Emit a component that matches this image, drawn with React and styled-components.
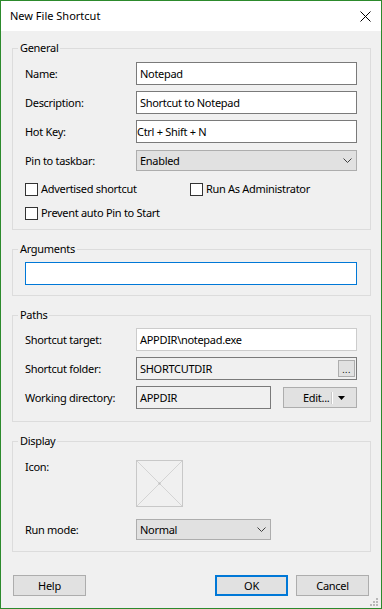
import React from 'react';
import styled, { createGlobalStyle } from 'styled-components';

const Global = createGlobalStyle`
  html, body { margin: 0; padding: 0; background: #fff; }
  body { font-family: "Noto Sans", "Open Sans", sans-serif; font-size: 11px; color: #000; letter-spacing: -0.3px; }
  *, *::before, *::after { box-sizing: border-box; }
`;

const Window = styled.div`
  position: relative;
  width: 382px;
  height: 609px;
  border: 1px solid #2c8a2c;
  display: flex;
  flex-direction: column;
  background: #f0f0f0;
`;

const TitleBar = styled.div`
  flex: none;
  height: 30px;
  background: #fff;
  display: flex;
  align-items: center;
  justify-content: space-between;
  padding: 0 10px 0 9px;
  font-size: 11px;
  line-height: 16px;
  letter-spacing: 0;
`;

const Body = styled.div`
  flex: 1;
  display: flex;
  flex-direction: column;
  gap: 11px;
  padding: 9px 10px 12px 11px;
`;

const Group = styled.fieldset`
  margin: 0;
  padding: 0;
  min-width: 0;
  border: 1px solid #dcdcdc;
`;

const Legend = styled.legend`
  margin-left: 5px;
  padding: 0 2px;
  line-height: 16px;
`;

const GroupBody = styled.div`
  padding: ${p => p.$pad};
`;

const FormGrid = styled.div`
  display: grid;
  grid-template-columns: 111px 221px;
  grid-auto-rows: 23px;
  row-gap: 6px;
  align-items: center;
`;

const Label = styled.div`
  line-height: 16px;
  white-space: nowrap;
  align-self: ${p => (p.$top ? 'start' : 'center')};
  margin-top: ${p => (p.$top ? '10px' : '0')};
`;

const TextBox = styled.div`
  height: 23px;
  width: ${p => p.$width || '100%'};
  display: flex;
  align-items: center;
  justify-content: ${p => (p.$spread ? 'space-between' : 'flex-start')};
  padding: 0 ${p => (p.$flush ? '0' : '3px')};
  background: ${p => (p.$readonly ? '#f0f0f0' : '#fff')};
  border: 1px solid ${p => p.$border || '#7a7a7a'};
  line-height: 16px;
  white-space: nowrap;
`;

const Select = styled.div`
  height: 21px;
  width: ${p => p.$width || '100%'};
  display: flex;
  align-items: center;
  justify-content: space-between;
  padding: 0 4px 0 3px;
  background: #e1e1e1;
  border: 1px solid #adadad;
  line-height: 16px;
`;

const Chevron = () => (
  <svg width="9" height="5" viewBox="0 0 9 5">
    <polyline points="0.5,0.5 4.5,4.5 8.5,0.5" fill="none" stroke="#404040" strokeWidth="1" />
  </svg>
);

const CheckGrid = styled.div`
  display: grid;
  grid-template-columns: 165px 1fr;
  row-gap: 8px;
  margin-top: 9px;
  padding-bottom: 8px;
`;

const CheckItem = styled.label`
  display: flex;
  align-items: center;
  gap: 3px;
  line-height: 16px;
  white-space: nowrap;
`;

const CheckBox = styled.span`
  flex: none;
  width: 13px;
  height: 13px;
  border: 1px solid #333;
  background: #fff;
`;

const Row = styled.div`
  display: flex;
  align-items: center;
  gap: 12px;
`;

const Button = styled.div`
  width: ${p => p.$width || '73px'};
  height: 21px;
  display: flex;
  align-items: center;
  justify-content: center;
  background: #e1e1e1;
  border: ${p => (p.$default ? '2px solid #0078d7' : '1px solid #adadad')};
  line-height: 16px;
`;

const SplitButton = styled(Button)`
  width: 74px;
  justify-content: flex-start;
  padding-left: 19px;
`;

const SplitDivider = styled.span`
  width: 1px;
  height: 12px;
  margin-left: 3px;
  background: #fff;
  box-shadow: -1px 0 0 #c8c8c8;
`;

const SplitArrow = styled.svg`
  margin-left: 5px;
`;

const BrowseButton = styled.div`
  width: 17px;
  height: 17px;
  display: flex;
  align-items: flex-end;
  justify-content: center;
  margin-right: -2px;
  padding-bottom: 2px;
  background: #e1e1e1;
  border: 1px solid #adadad;
  font-size: 9px;
  line-height: 9px;
  letter-spacing: 0.5px;
`;

const IconBox = styled.div`
  width: 47px;
  height: 47px;
  margin-top: 11px;
  display: flex;
`;

const DisplayGrid = styled.div`
  display: grid;
  grid-template-columns: 111px 221px;
  grid-template-rows: auto 21px;
  row-gap: 12px;
`;

const Footer = styled.div`
  margin-top: auto;
  display: flex;
  justify-content: space-between;
  padding: 0 2px 0 1px;
`;

const ButtonGroup = styled.div`
  display: flex;
  gap: 8px;
`;

const Grip = styled.svg`
  position: absolute;
  right: 3px;
  bottom: 2px;
`;

export default function App() {
  return (
    <>
      <Global />
      <Window>
        <TitleBar>
          <span>New File Shortcut</span>
          <svg width="11" height="11" viewBox="0 0 11 11">
            <path d="M0.5 0.5 L10.5 10.5 M10.5 0.5 L0.5 10.5" stroke="#000" strokeWidth="1" fill="none" />
          </svg>
        </TitleBar>
        <Body>
          <Group>
            <Legend>General</Legend>
            <GroupBody $pad="6px 13px 0 12px">
              <FormGrid>
                <Label>Name:</Label>
                <TextBox>Notepad</TextBox>
                <Label>Description:</Label>
                <TextBox>Shortcut to Notepad</TextBox>
                <Label>Hot Key:</Label>
                <TextBox $flush>Ctrl + Shift + N</TextBox>
                <Label>Pin to taskbar:</Label>
                <Select>
                  <span>Enabled</span>
                  <Chevron />
                </Select>
              </FormGrid>
              <CheckGrid>
                <CheckItem><CheckBox />Advertised shortcut</CheckItem>
                <CheckItem><CheckBox />Run As Administrator</CheckItem>
                <CheckItem><CheckBox />Prevent auto Pin to Start</CheckItem>
              </CheckGrid>
            </GroupBody>
          </Group>

          <Group>
            <Legend>Arguments</Legend>
            <GroupBody $pad="5px 13px 10px 12px">
              <TextBox $border="#0078d7" />
            </GroupBody>
          </Group>

          <Group>
            <Legend>Paths</Legend>
            <GroupBody $pad="5px 13px 12px 12px">
              <FormGrid>
                <Label>Shortcut target:</Label>
                <TextBox $border="#cccccc">APPDIR\notepad.exe</TextBox>
                <Label>Shortcut folder:</Label>
                <TextBox $readonly $spread>
                  <span>SHORTCUTDIR</span>
                  <BrowseButton>...</BrowseButton>
                </TextBox>
                <Label>Working directory:</Label>
                <Row>
                  <TextBox $readonly $width="135px">APPDIR</TextBox>
                  <SplitButton>
                    <span>Edit...</span>
                    <SplitDivider />
                    <SplitArrow width="7" height="4" viewBox="0 0 7 4">
                      <polygon points="0,0 7,0 3.5,4" fill="#000" />
                    </SplitArrow>
                  </SplitButton>
                </Row>
              </FormGrid>
            </GroupBody>
          </Group>

          <Group>
            <Legend>Display</Legend>
            <GroupBody $pad="0 13px 11px 12px">
              <DisplayGrid>
                <Label $top>Icon:</Label>
                <IconBox>
                  <svg width="47" height="47" viewBox="0 0 47 47">
                    <rect x="0.5" y="0.5" width="46" height="46" fill="none" stroke="#c8c8c8" />
                    <path d="M1 1 L46 46 M46 1 L1 46" stroke="#d4d4d4" strokeWidth="1" fill="none" />
                    <rect x="22.5" y="22.5" width="2" height="2" fill="#bdbdbd" />
                  </svg>
                </IconBox>
                <Label>Run mode:</Label>
                <Select $width="135px">
                  <span>Normal</span>
                  <Chevron />
                </Select>
              </DisplayGrid>
            </GroupBody>
          </Group>

          <Footer>
            <Button>Help</Button>
            <ButtonGroup>
              <Button $default>OK</Button>
              <Button>Cancel</Button>
            </ButtonGroup>
          </Footer>
        </Body>
        <Grip width="8" height="8" viewBox="0 0 8 8">
          <rect x="6" y="0" width="2" height="2" fill="#b8b8b8" />
          <rect x="3" y="3" width="2" height="2" fill="#b8b8b8" />
          <rect x="6" y="3" width="2" height="2" fill="#b8b8b8" />
          <rect x="0" y="6" width="2" height="2" fill="#b8b8b8" />
          <rect x="3" y="6" width="2" height="2" fill="#b8b8b8" />
          <rect x="6" y="6" width="2" height="2" fill="#b8b8b8" />
        </Grip>
      </Window>
    </>
  );
}
